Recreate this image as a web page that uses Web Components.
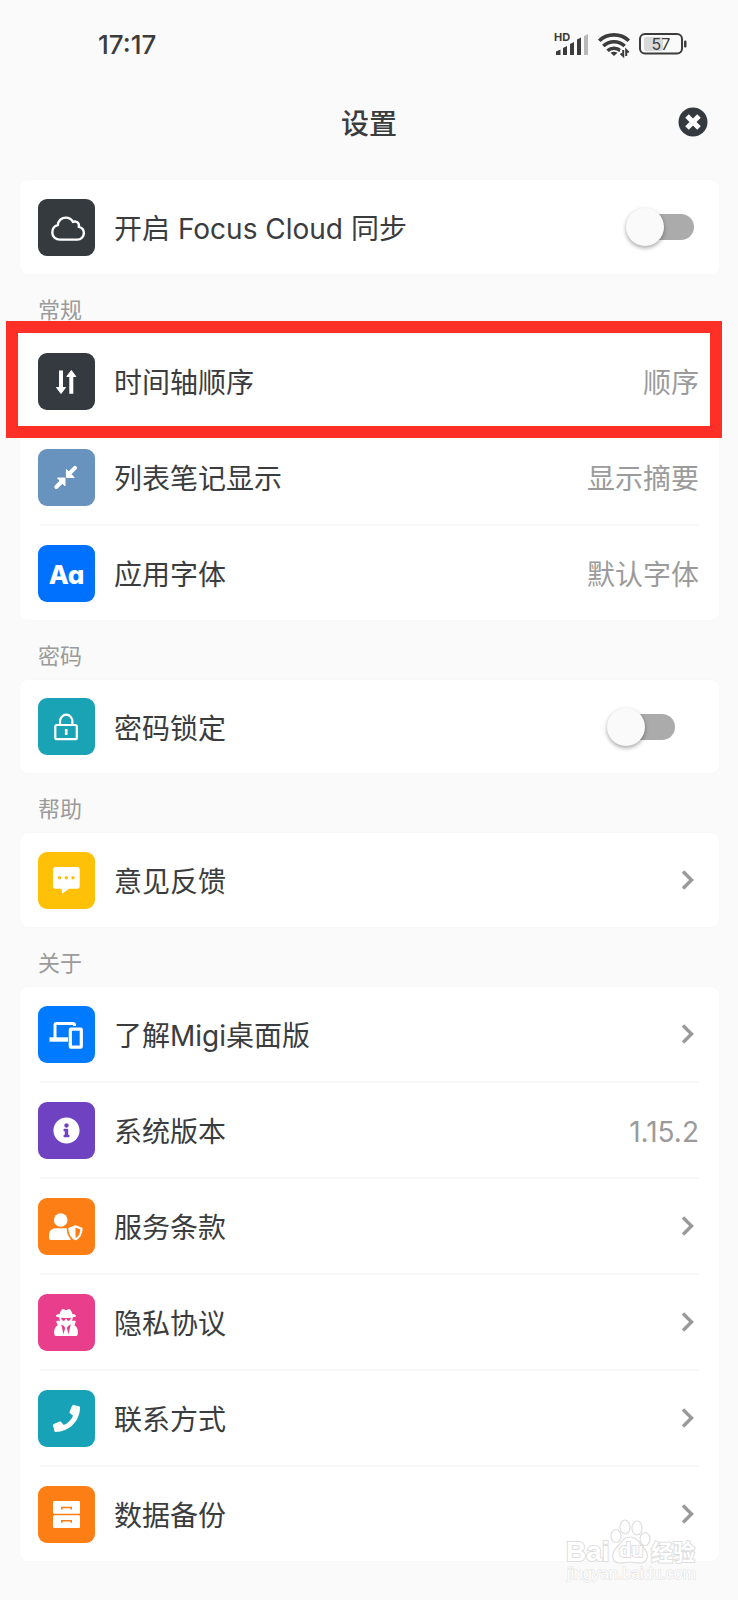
<!DOCTYPE html>
<html lang="zh-CN">
<head>
  <meta charset="utf-8">
  <meta name="viewport" content="width=device-width, initial-scale=1">
  <title>设置</title>
  <style>
    :root {
      --text: #3a3c3e;
      --muted: #9b9b9b;
      --line: #f8f8f8;
      --page: #fafafa;
      --mark: #fd2f26;
    }

    body {
      margin: 0;
      background: var(--page);
      color: var(--text);
      font-family: Inter, "Noto Sans CJK SC", sans-serif;
      font-size: 28px;
      line-height: 40px;
    }
  </style>
</head>
<body>
  <settings-page>
    <status-bar slot="top" time="17:17" battery="57"></status-bar>
    <title-bar slot="top">设置</title-bar>

    <settings-group>
      <settings-row icon="cloud" color="#343a3d" kind="switch">开启 Focus Cloud 同步</settings-row>
    </settings-group>

    <settings-group heading="常规">
      <settings-row icon="sort" color="#343a40" kind="button" value="顺序" marked>时间轴顺序</settings-row>
      <settings-row icon="compress" color="#6893bf" kind="button" value="显示摘要">列表笔记显示</settings-row>
      <settings-row icon="font" color="#0071ff" kind="button" value="默认字体">应用字体</settings-row>
    </settings-group>

    <settings-group heading="密码">
      <settings-row icon="lock" color="#1aa2b5" kind="switch" inset>密码锁定</settings-row>
    </settings-group>

    <settings-group heading="帮助">
      <settings-row icon="comment" color="#ffc107" kind="link">意见反馈</settings-row>
    </settings-group>

    <settings-group heading="关于">
      <settings-row icon="devices" color="#007bff" kind="link">了解Migi桌面版</settings-row>
      <settings-row icon="info" color="#6f42c1" value="1.15.2">系统版本</settings-row>
      <settings-row icon="terms" color="#fd7e14" kind="link">服务条款</settings-row>
      <settings-row icon="secret" color="#e83e8c" kind="link">隐私协议</settings-row>
      <settings-row icon="phone" color="#17a2b8" kind="link">联系方式</settings-row>
      <settings-row icon="cabinet" color="#fd7e14" kind="link">数据备份</settings-row>
    </settings-group>

    <water-mark slot="overlay"></water-mark>
  </settings-page>

  <script>
    // Glyphs for the 57px tiles
    const icons = {
      cloud: `<path fill="none" stroke="#fff" stroke-width="2.4" stroke-linejoin="round" d="M22 40.6c-4.4 0-7.7-3.1-7.7-7.2 0-3.6 2.3-6.500 5.600-7.300.2-4.300 3.700-7.500 7.900-7.500 3.200 0 5.800 1.700 7.200 4.400.9-.5 1.800-.7 2.700-.4 2.500.5 3.800 2.700 3 5.300 3.100.6 5.200 3.100 5.200 6.200 0 3.700-2.900 6.500-6.600 6.500z"/>`,
      sort: `<path fill="none" stroke="#fff" stroke-width="4" d="M23 17.5V36M33.3 40.7V22"/>
        <path fill="#fff" stroke="#fff" stroke-linejoin="round" d="M18.5 34.5h9L23 40.5zM28.8 23.5h9l-4.5-6z"/>`,
      compress: `<path stroke="#fff" stroke-width="4" stroke-linecap="round" d="M37 18.800l-6 6M18.300 38l6-6"/>
        <path fill="#fff" stroke="#fff" stroke-linejoin="round" d="M28.400 20.500v8h7.800zM27 29h-7.500l7.500 8z"/>`,
      font: `<text x="28.5" y="38.5" text-anchor="middle" fill="#fff" font-family="Inter, sans-serif" font-size="26" font-weight="800" style="font-feature-settings:'cv11'">Aa</text>`,
      lock: `<g fill="none" stroke="#fff" stroke-width="2.2"><rect x="17.3" y="27" width="21.500" height="14.200" rx="1.500"/><path d="M22 27v-3.500a6.200 6.800 0 0 1 12.400 0V27"/></g>
        <path stroke="#fff" stroke-width="2.6" d="M28.2 31v6"/>`,
      comment: `<path fill="#fff" d="M17.5 15h21.700a2.500 2.500 0 0 1 2.500 2.500v16.700a2.500 2.500 0 0 1-2.500 2.500H31l-6.200 4.600q-1 .5-1-.7v-3.900h-6.300a2.500 2.500 0 0 1-2.500-2.500V17.500a2.500 2.500 0 0 1 2.500-2.500z"/>
        <g fill="#ffc107"><circle cx="21.6" cy="25.8" r="1.7"/><circle cx="28.3" cy="25.8" r="1.7"/><circle cx="35" cy="25.8" r="1.7"/></g>`,
      devices: `<g fill="none" stroke="#fff" stroke-width="3"><path d="M17 32.500V19a1.500 1.500 0 0 1 1.500-1.500H35a1.500 1.500 0 0 1 1.500 1.500v1"/><path d="M11.500 33.500H30" stroke-width="4.400"/><rect x="32.300" y="23.200" width="11" height="18" rx=".6" stroke-width="3.200"/></g>`,
      info: `<svg x="15" y="15" width="27" height="27" viewBox="0 0 512 512"><path fill="#fff" d="M256 8C119.043 8 8 119.083 8 256c0 136.997 111.043 248 248 248s248-111.003 248-248C504 119.083 392.957 8 256 8zm0 110c23.196 0 42 18.804 42 42s-18.804 42-42 42-42-18.804-42-42 18.804-42 42-42zm56 254c0 6.627-5.373 12-12 12h-88c-6.627 0-12-5.373-12-12v-24c0-6.627 5.373-12 12-12h12v-64h-12c-6.627 0-12-5.373-12-12v-24c0-6.627 5.373-12 12-12h64c6.627 0 12 5.373 12 12v100h12c6.627 0 12 5.373 12 12v24z"/></svg>`,
      terms: `<g fill="#fff"><circle cx="22.700" cy="22" r="6.800"/><path d="M17.500 30.200h10.400a7 7 0 0 1 4.600 1.800v10H13q-2 0-2-2v-3.300a6.500 6.500 0 0 1 6.500-6.500z"/>
        <path stroke="#fd7e14" stroke-width="1.600" d="M37.500 26.300l8 3.100c0 6.600-2.600 11.600-8 13.800-5.400-2.200-8-7.200-8-13.800z"/></g>
        <path fill="#fd7e14" d="M37.500 29.500l4.800 1.900c-.2 4.100-1.700 7-4.800 8.700z"/>`,
      secret: `<svg x="16" y="15" width="24" height="27" viewBox="0 0 448 512"><path fill="#fff" d="M383.900 308.300l23.900-62.600c4-10.500-3.700-21.700-15-21.700h-58.500c11-18.900 17.800-40.600 17.800-64v-.3c39.200-7.800 64-19.100 64-31.700 0-13.300-27.300-25.100-70.100-33-9.200-32.800-27-65.800-40.600-82.800-9.500-11.900-25.900-15.600-39.500-8.800l-27.600 13.800c-9 4.500-19.600 4.500-28.600 0L182.100 3.400c-13.600-6.800-30-3.100-39.500 8.800-13.500 17-31.400 50-40.600 82.800-42.700 7.900-70 19.700-70 33 0 12.600 24.800 23.900 64 31.700v.3c0 23.400 6.800 45.100 17.800 64H56.300c-11.500 0-19.200 11.700-14.700 22.300l25.800 60.200C27.300 329.800 0 372.700 0 422.400v44.800C0 491.900 20.100 512 44.800 512h358.400c24.700 0 44.800-20.100 44.800-44.800v-44.800c0-48.400-25.800-90.400-64.100-114.100zM176 480l-41.600-192 49.600 32 24 40-32 120zm96 0l-32-120 24-40 49.600-32L272 480zm41.700-298.500c-3.900 11.900-7 24.600-16.500 33.400-10.100 9.300-48 22.400-64-25-2.800-8.400-15.400-8.400-18.300 0-17 50.200-56 32.400-64 25-9.500-8.800-12.700-21.500-16.500-33.400-.8-2.500-6.300-5.700-6.300-5.800v-10.800c28.300 3.600 61 5.800 96 5.800s67.700-2.100 96-5.800v10.800c-.1.1-5.600 3.200-6.400 5.800z"/></svg>`,
      phone: `<svg x="15" y="15" width="27" height="27" viewBox="0 0 512 512"><path fill="#fff" d="M493.400 24.600l-104-24c-11.300-2.600-22.900 3.300-27.500 13.900l-48 112c-4.200 9.800-1.400 21.300 6.900 28l60.600 49.600c-36 76.700-98.900 140.500-177.200 177.200l-49.600-60.600c-6.800-8.300-18.200-11.100-28-6.900l-112 48C3.900 366.500-2 378.100.6 389.400l24 104C27.100 504.200 36.700 512 48 512c256.100 0 464-207.500 464-464 0-11.200-7.700-20.900-18.600-23.400z"/></svg>`,
      cabinet: `<g fill="#fff"><rect x="15" y="15" width="27" height="12.700" rx="1.200"/><rect x="15" y="29.300" width="27" height="12.700" rx="1.200"/></g>
        <path fill="none" stroke="#fd7e14" stroke-width="1.600" d="M23.800 23.500v-2h9.400v2M23.800 36.800v-2h9.400v2"/>`
    };

    // Attach an open shadow root and fill it
    const render = (host, html) => {
      host.attachShadow({ mode: 'open' });
      const tmpl = document.createElement('template');
      tmpl.innerHTML = html;
      host.shadowRoot.appendChild(tmpl.content.cloneNode(true));
    };

    class SettingsPage extends HTMLElement {
      constructor() {
        super();
        render(this, `
          <style>
            :host {
              display: block;
              position: relative;
              min-height: 100vh;
              box-sizing: border-box;
              padding-bottom: 39px;
            }

            main {
              display: flex;
              flex-direction: column;
              padding: 24px 19px 0 20px;
            }
          </style>
          <header><slot name="top"></slot></header>
          <main><slot></slot></main>
          <slot name="overlay"></slot>
        `);
      }
    }

    class StatusBar extends HTMLElement {
      connectedCallback() {
        render(this, `
          <style>
            :host {
              display: flex;
              align-items: center;
              justify-content: space-between;
              height: 88px;
              padding: 0 51px 0 98px;
              color: #3c3c3c;
            }

            time {
              padding-top: 2px;
              font-size: 26px;
              font-weight: 500;
            }

            div {
              display: flex;
              align-items: center;
              gap: 9px;
            }

            svg {
              display: block;
              overflow: visible;
            }

            text {
              font-family: Inter, sans-serif;
              fill: currentColor;
            }
          </style>
          <time>${this.getAttribute('time')}</time>
          <div>
            <svg width="35" height="24" viewBox="0 0 35 24" role="img" aria-label="信号">
              <text x="0" y="9" font-size="11" font-weight="700">HD</text>
              <path fill="currentColor" d="M2 23v-3.500l4.500-2V23zM9 23v-7l4-2v9zM16 23V12l4-2v13zM23 23V7.500l4-2V23z"/>
              <path fill="#b9b9b9" d="M30 23V4l4-2v21z"/>
            </svg>
            <svg width="32" height="24" viewBox="0 0 32 24" role="img" aria-label="无线网络">
              <g fill="none" stroke="currentColor" stroke-width="3.600">
                <path d="M1.200 8.800a21.500 21.500 0 0 1 29.600 0"/>
                <path d="M5.300 14a15.500 15.500 0 0 1 21.400 0"/>
                <path d="M9.500 18.800a9.500 9.500 0 0 1 13 0"/>
              </g>
              <path fill="currentColor" d="M12.500 20.800q3.500-2.200 7 0L16 24z"/>
              <path stroke="#fafafa" stroke-width="9" d="M26.500 17.500V26"/>
              <path fill="none" stroke="currentColor" stroke-width="2" d="M25.200 18v6l-2.600-2.500M28.200 24v-6l2.500 2.500"/>
            </svg>
            <svg width="48" height="22" viewBox="0 0 48 22" role="img" aria-label="电量">
              <rect x="5" y="4" width="19" height="14" rx="2" fill="#d9d9d9"/>
              <rect x="1" y="1" width="42" height="19.500" rx="5" fill="none" stroke="currentColor" stroke-width="2"/>
              <rect x="45" y="7.500" width="2.500" height="7" rx="1.200" fill="currentColor"/>
              <text x="22" y="16.500" text-anchor="middle" font-size="16">${this.getAttribute('battery')}</text>
            </svg>
          </div>
        `);
      }
    }

    class TitleBar extends HTMLElement {
      constructor() {
        super();
        render(this, `
          <style>
            :host {
              display: grid;
              grid-template-columns: 1fr auto 1fr;
              align-items: center;
              height: 68px;
              padding: 0 30px;
            }

            h1 {
              grid-column: 2;
              margin: 0;
              padding-top: 4px;
              font-size: 28px;
              font-weight: 500;
            }

            button {
              all: unset;
              justify-self: end;
              cursor: pointer;
            }

            button:focus-visible {
              outline: 2px solid #007bff;
              border-radius: 50%;
            }

            svg {
              display: block;
            }
          </style>
          <h1><slot></slot></h1>
          <button aria-label="关闭">
            <svg width="30" height="30" viewBox="0 0 30 30" aria-hidden="true">
              <circle cx="15" cy="15" r="14.500" fill="#343a40"/>
              <path stroke="#fff" stroke-width="5" d="M9 9l12 12M21 9L9 21"/>
            </svg>
          </button>
        `);
      }
    }

    class SettingsGroup extends HTMLElement {
      connectedCallback() {
        const heading = this.getAttribute('heading');
        render(this, `
          <style>
            :host {
              display: block;
            }

            h2 {
              display: flex;
              align-items: center;
              height: 60px;
              box-sizing: border-box;
              margin: 0;
              padding: 12px 18px 0;
              color: var(--muted);
              font-size: 22px;
              font-weight: 400;
            }

            section {
              display: flex;
              flex-direction: column;
              gap: 2px;
              border-radius: 8px;
              background: #fff;
              box-shadow: 0 0 2px rgba(0, 0, 0, .03);
            }
          </style>
          ${heading ? `<h2>${heading}</h2>` : ''}
          <section><slot></slot></section>
        `);
      }
    }

    class SettingsRow extends HTMLElement {
      connectedCallback() {
        const kind = this.getAttribute('kind');
        const value = this.getAttribute('value');
        const tags = { switch: 'label', button: 'button', link: 'a' };
        const tag = tags[kind] || 'div';
        const first = !this.previousElementSibling;

        let end = '';
        if (kind === 'switch') end = '<input type="checkbox" role="switch" id="toggle">';
        if (kind === 'link') end = '<svg class="chevron" width="14" height="20" viewBox="0 0 14 20" aria-hidden="true"><path fill="none" stroke="#999" stroke-width="3.400" d="M2 1.500l8.500 8.500L2 18.500"/></svg>';
        if (value) end = `<span class="value">${value}</span>`;

        render(this, `
          <style>
            :host {
              display: block;
              position: relative;
            }

            .row {
              all: unset;
              display: flex;
              align-items: center;
              gap: 19px;
              box-sizing: border-box;
              width: 100%;
              height: 94px;
              padding: 0 20px 0 18px;
              color: inherit;
              ${kind ? 'cursor: pointer;' : ''}
            }

            .row:focus-visible {
              outline: 2px solid #007bff;
            }

            .tile {
              flex: none;
              width: 57px;
              height: 57px;
              border-radius: 9px;
              background: ${this.getAttribute('color')};
            }

            .tile svg {
              display: block;
            }

            .name {
              flex: 1;
            }

            .name,
            .value {
              padding-top: 4px;
            }

            .value {
              color: var(--muted);
            }

            .chevron {
              flex: none;
              margin-right: 4px;
            }

            .line {
              height: 2px;
              margin: -2px 20px 0;
              background: var(--line);
            }

            input {
              appearance: none;
              flex: none;
              display: flex;
              align-items: center;
              width: 62px;
              height: 26px;
              margin: 0 5px 0 0;
              border-radius: 13px;
              background: #ababab;
              cursor: pointer;
            }

            input::before {
              content: "";
              width: 38px;
              height: 38px;
              margin-left: -6px;
              border-radius: 50%;
              background: #fafafa;
              box-shadow: 0 2px 4px rgba(0, 0, 0, .35);
            }

            input:checked {
              justify-content: flex-end;
              background: #80bdff;
            }

            input:checked::before {
              margin-right: -6px;
              background: #007bff;
            }

            :host([inset]) .row {
              height: 93px;
            }

            :host([inset]) input {
              margin-right: 24px;
            }

            .mark {
              position: absolute;
              z-index: 1;
              inset: -13px -3px -10px -14px;
              border: 12px solid var(--mark);
              pointer-events: none;
            }
          </style>
          ${first ? '' : '<div class="line"></div>'}
          <${tag} class="row"${kind === 'link' ? ' href="#"' : ''}${kind === 'switch' ? ' for="toggle"' : ''}>
            <span class="tile"><svg width="57" height="57" viewBox="0 0 57 57" aria-hidden="true">${icons[this.getAttribute('icon')]}</svg></span>
            <span class="name"><slot></slot></span>
            ${end}
          </${tag}>
          ${this.hasAttribute('marked') ? '<div class="mark"></div>' : ''}
        `);
      }
    }

    class WaterMark extends HTMLElement {
      constructor() {
        super();
        render(this, `
          <style>
            :host {
              position: absolute;
              right: 40px;
              bottom: 14px;
              width: 132px;
              font-family: "Liberation Sans", "Noto Sans CJK SC", sans-serif;
              pointer-events: none;
            }

            svg {
              display: block;
              overflow: visible;
            }

            text {
              fill: #fff;
              stroke: #dedede;
              stroke-width: 2px;
              paint-order: stroke;
              font-weight: 700;
            }

            .url {
              stroke-width: 1px;
              font-weight: 400;
            }
          </style>
          <svg width="132" height="66" viewBox="0 0 132 66" role="img" aria-label="Baidu 经验">
            <text x="0" y="41" font-size="28">Bai</text>
            <g fill="#fff" stroke="#dedede" stroke-width="1.200">
              <ellipse cx="50" cy="16" rx="5" ry="6.500"/>
              <ellipse cx="59" cy="7" rx="5" ry="7"/>
              <ellipse cx="71" cy="8" rx="5" ry="7"/>
              <ellipse cx="79" cy="19" rx="5" ry="6.500"/>
              <path d="M64 17c7 0 9 6 13 10 8 8 4 16-3 16-4 0-6-1-10-1s-6 1-10 1c-8 0-10-9-3-16 4-4 6-10 13-10z"/>
            </g>
            <text x="53" y="37" font-size="20">du</text>
            <text x="85" y="40" font-size="22">经验</text>
            <text class="url" x="1" y="59" font-size="16">jingyan.baidu.com</text>
          </svg>
        `);
      }
    }

    customElements.define('settings-page', SettingsPage);
    customElements.define('status-bar', StatusBar);
    customElements.define('title-bar', TitleBar);
    customElements.define('settings-group', SettingsGroup);
    customElements.define('settings-row', SettingsRow);
    customElements.define('water-mark', WaterMark);
  </script>
</body>
</html>
